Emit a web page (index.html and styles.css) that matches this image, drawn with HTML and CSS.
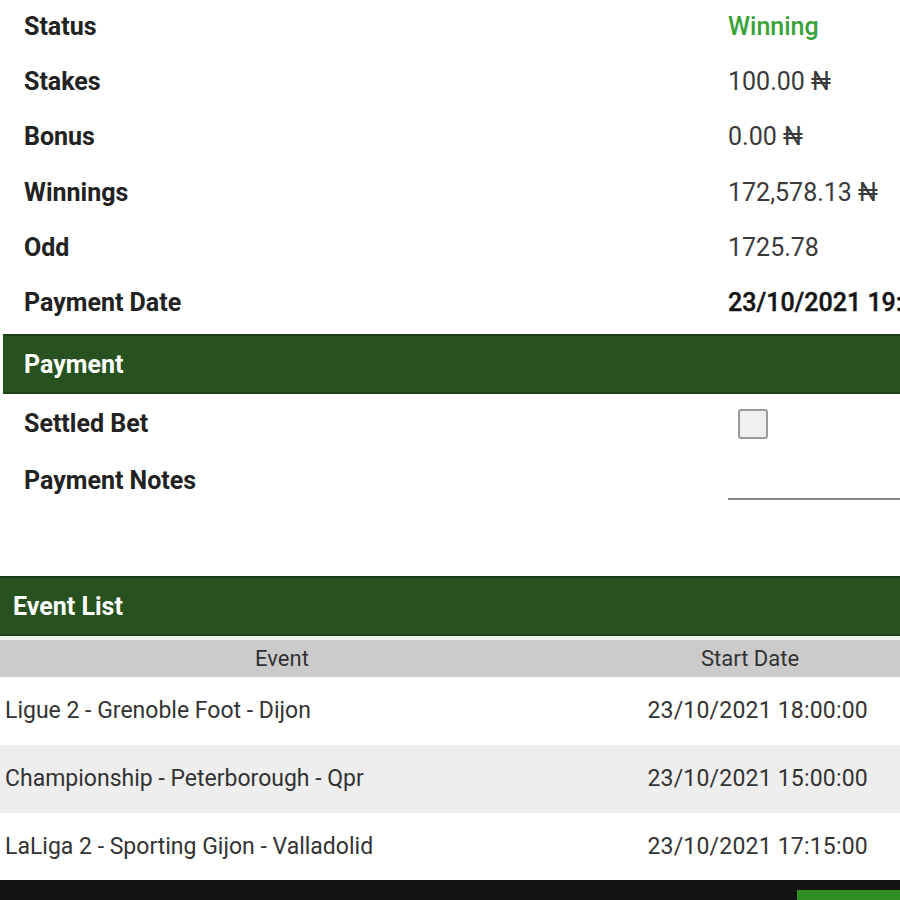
FILE: index.html
```html
<!DOCTYPE html>
<html lang="en">
<head>
<meta charset="UTF-8" />
<meta name="viewport" content="width=device-width,initial-scale=1" />
<title>Bet Details</title>
<link rel="stylesheet" href="styles.css">
</head>
<body>
  <div class="page">
    <!-- bet summary -->
    <section class="details">
      <div class="row"><span class="label">Status</span><span class="value win">Winning</span></div>
      <div class="row"><span class="label">Stakes</span><span class="value">100.00 ₦</span></div>
      <div class="row"><span class="label">Bonus</span><span class="value">0.00 ₦</span></div>
      <div class="row"><span class="label">Winnings</span><span class="value">172,578.13 ₦</span></div>
      <div class="row"><span class="label">Odd</span><span class="value">1725.78</span></div>
      <div class="row"><span class="label">Payment Date</span><span class="value strong">23/10/2021 19:05:12</span></div>
    </section>

    <!-- payment -->
    <h2 class="band band-payment">Payment</h2>
    <section class="details payment">
      <div class="row"><span class="label">Settled Bet</span><span class="value"><input type="checkbox" class="check" /></span></div>
      <div class="row"><span class="label">Payment Notes</span><span class="value"><input type="text" class="notes" /></span></div>
    </section>

    <!-- events -->
    <h2 class="band band-events">Event List</h2>
    <div class="events">
      <div class="ev-head">
        <span>Event</span>
        <span>Start Date</span>
      </div>
      <div class="ev-row">
        <span class="ev-name">Ligue 2 - Grenoble Foot - Dijon</span>
        <span class="ev-date">23/10/2021 18:00:00</span>
      </div>
      <div class="ev-row alt">
        <span class="ev-name">Championship - Peterborough - Qpr</span>
        <span class="ev-date">23/10/2021 15:00:00</span>
      </div>
      <div class="ev-row">
        <span class="ev-name">LaLiga 2 - Sporting Gijon - Valladolid</span>
        <span class="ev-date">23/10/2021 17:15:00</span>
      </div>
    </div>

    <footer class="bottom-bar"><span class="bottom-btn"></span></footer>
  </div>
</body>
</html>
```

FILE: styles.css
```css
/* ---------- Theme ---------- */
:root {
  --band: #275220;
  --win: #3ba13a;
  --text: #222;
  --muted: #3a3a3a;
}
* { box-sizing: border-box; }
html, body { margin: 0; overflow: hidden; }
body {
  font-family: Roboto, "Liberation Sans", Arial, sans-serif;
  background: #fff;
  color: var(--text);
}
.page { width: 936px; }

/* ---------- Detail rows ---------- */
.details { margin-top: -1px; }
.row {
  display: grid;
  grid-template-columns: 728px 1fr;
  align-items: center;
  height: 55.2px;
  white-space: nowrap;
}
.label {
  padding-left: 24px;
  font-size: 25px;
  font-weight: 700;
  color: var(--text);
}
.value { font-size: 25px; color: var(--muted); }
.value.win { color: var(--win); font-weight: 500; }
.value.strong { color: #151515; font-weight: 500; -webkit-text-stroke: 0.4px #151515; }

/* ---------- Bands ---------- */
.band {
  margin: 0;
  height: 60px;
  display: flex;
  align-items: center;
  background: var(--band);
  color: #fff;
  font-size: 25px;
  font-weight: 700;
  border-top: 2px solid #1d3d18;
  border-bottom: 2px solid #1e3f18;
}
.band-payment { margin: 4px 0 0 3px; padding-left: 21px; }
.band-events { padding-left: 13px; }

/* ---------- Payment ---------- */
.payment { margin-top: 0; padding-top: 1px; height: 182px; }
.payment .row { height: 57px; }
.check {
  appearance: none;
  -webkit-appearance: none;
  margin: 6px 0 0 10px;
  width: 30px;
  height: 30px;
  border: 2px solid #9a9a9a;
  border-radius: 3px;
  background: #efefef;
}
.notes {
  display: block;
  width: 208px;
  margin-top: 28px;
  border: none;
  border-bottom: 2px solid #8a8a8a;
  padding: 0;
  height: 10px;
  background: transparent;
}

/* ---------- Event table ---------- */
.events { border-top: 4px solid #f1f4ef; }
.ev-head, .ev-row {
  display: grid;
  grid-template-columns: 564px 372px;
  align-items: center;
}
.ev-head {
  height: 37px;
  background: #cbcbcb;
  font-size: 22px;
  color: #333;
  text-align: center;
}
.ev-row {
  height: 67.7px;
  font-size: 23px;
  color: #333;
}
.ev-row.alt { background: #eeeeee; }
.ev-name { padding-left: 5px; }
.ev-date { text-align: right; padding-right: 68px; letter-spacing: 0.2px; }

/* ---------- Bottom bar ---------- */
.bottom-bar {
  height: 20px;
  background: #141414;
  display: flex;
  justify-content: flex-end;
  align-items: flex-end;
  padding-right: 36px;
}
.bottom-btn {
  width: 103px;
  height: 10px;
  background: #2f8f22;
}
```
